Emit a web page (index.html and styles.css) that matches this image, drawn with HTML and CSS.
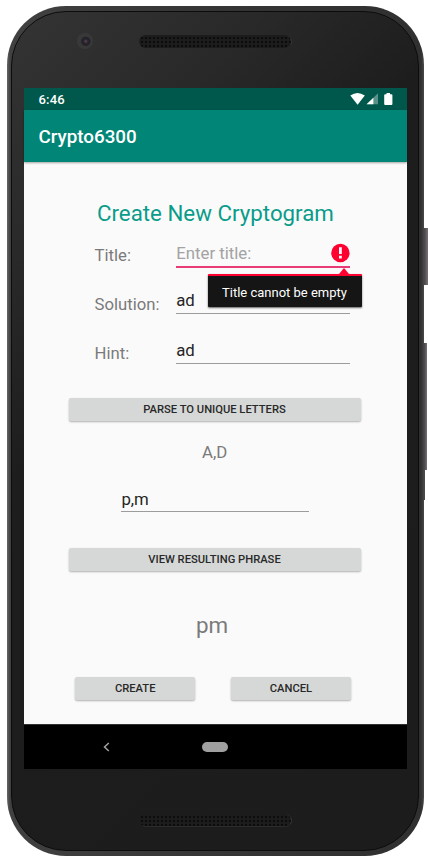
FILE: index.html
```html
<!DOCTYPE html>
<html lang="en">
<head>
<meta charset="utf-8">
<title>Crypto6300</title>
<link rel="stylesheet" href="styles.css">
</head>
<body>
<div class="phone">
  <span class="side-key power"></span>
  <span class="side-key volume"></span>
  <span class="side-key edge"></span>
  <div class="bezel">
    <div class="top-bezel">
      <span class="camera"></span>
      <span class="speaker"></span>
    </div>
    <div class="screen">
      <div class="status-bar">
        <span class="clock">6:46</span>
        <svg class="status-icons" width="43" height="14" viewBox="0 0 43 14">
          <path fill="#fff" d="M.3 3.6Q7.5-1.4 14.8 3.6L7.6 12.7Z"/>
          <path fill="#fff" fill-opacity=".35" d="M28 1.2V12.3H16.6Z"/>
          <path fill="#fff" d="M23.4 5.7V12.3H16.6Z"/>
          <path fill="#fff" d="M36.500 1h3.500v1.300h1.400q1 0 1 1v8.600q0 1-1 1h-6.200q-1 0-1-1V3.300q0-1 1-1H36.500Z"/>
        </svg>
      </div>
      <header class="app-bar">Crypto6300</header>
      <main class="content">
        <h1>Create New Cryptogram</h1>
        <form class="fields">
          <div class="field title-field">
            <label>Title:</label>
            <div class="input invalid"><span class="placeholder">Enter title:</span>
              <svg class="error-icon" width="20" height="20" viewBox="0 0 20 20"><circle cx="10.400" cy="10" r="9.200" fill="#ff0030"/><path d="M9 4.300h2.800v6.800H9zM9 12.800h2.800v2.600H9z" fill="#fff"/></svg>
              <div class="tooltip">Title cannot be empty</div>
            </div>
          </div>
          <div class="field solution-field"><label>Solution:</label><div class="input">ad</div></div>
          <div class="field hint-field"><label>Hint:</label><div class="input">ad</div></div>
        </form>
        <div class="button parse">PARSE TO UNIQUE LETTERS</div>
        <div class="letters">A,D</div>
        <div class="input mapping">p,m</div>
        <div class="button view">VIEW RESULTING PHRASE</div>
        <div class="phrase">pm</div>
        <div class="actions">
          <div class="button">CREATE</div>
          <div class="button">CANCEL</div>
        </div>
      </main>
      <nav class="nav-bar">
        <svg class="back" width="8" height="10" viewBox="0 0 8 10"><path d="M6.800 1L2.500 5l4.300 4" fill="none" stroke="#a2a2a2" stroke-width="1.500"/></svg>
        <span class="home"></span>
      </nav>
    </div>
    <div class="bottom-bezel"><span class="speaker"></span></div>
  </div>
</div>
</body>
</html>
```

FILE: styles.css
```css
* { box-sizing: border-box; }
body {
  margin: 0;
  height: 862px;
  padding: 6px 0 0 7px;
  overflow: hidden;
  background: #fff;
  font-family: Roboto, sans-serif;
}
.phone {
  position: relative;
  width: 417px;
  height: 850px;
  padding: 5px 5px 5px 4px;
  border-radius: 59px;
  background: linear-gradient(90deg, #666 0, #414142 3px, #353535 50%, #303031 414px, #4a484a 100%);
}
.side-key {
  position: absolute;
  left: 417px;
  background: linear-gradient(90deg, #454346, #777275);
}
.power { top: 222px; width: 4px; height: 57px; }
.volume { top: 337px; width: 3px; height: 127px; }
.edge { top: 464px; width: 1px; height: 30px; background: #4a484a; }
.bezel {
  height: 840px;
  border: 1px solid #0c0c0c;
  border-radius: 55px;
  padding: 0 0 0 12px;
  background: linear-gradient(135deg, #343435 0, #292929 20%, #1d1d1d 38%, #1c1c1c 100%);
}
.top-bezel {
  height: 76px;
  display: flex;
  align-items: flex-start;
  padding: 21px 0 0 53px;
}
.camera {
  width: 16px;
  height: 16px;
  border-radius: 50%;
  background: radial-gradient(circle at 55% 52%, #67474c 0, #292632 2px, #202027 4px, #373737 5px, #393939 8px);
}
.speaker {
  display: block;
  width: 153px;
  height: 13px;
  border-radius: 7px;
  border-right: 1px solid #363636;
  background: radial-gradient(circle, #060606 0, #090909 .6px, #1c1c1c 1.3px) 1px 1px / 4px 4px;
}
.top-bezel .speaker { margin: 2px 0 0 46px; }
.bottom-bezel { padding: 45px 0 0 115px; }
.bottom-bezel .speaker { background-color: #171717; border-bottom: 1px solid #2b2b2b; }
.screen {
  width: 383px;
  height: 681px;
  background: #fafafa;
}
.status-bar {
  height: 22px;
  padding: 0 14px 0 14.500px;
  display: flex;
  justify-content: space-between;
  align-items: center;
  background: #00574b;
  color: #fff;
}
.clock { font-size: 13px; font-weight: 500; letter-spacing: .2px; }
.status-icons { margin-bottom: 1px; }
.app-bar {
  height: 52px;
  line-height: 54px;
  padding-left: 14.500px;
  background: #008577;
  color: #fff;
  font-size: 18.800px;
  font-weight: 500;
  box-shadow: 0 1px 2px rgba(0,0,0,.35);
}
.content {
  height: 562px;
  padding-top: 38px;
  color: #7a7a7a;
}
h1 {
  margin: 0 0 13px 73px;
  line-height: 27px;
  height: 27px;
  font-size: 22.300px;
  font-weight: 400;
  color: #0a9c8a;
}
.fields { padding-left: 70.500px; }
.field {
  display: flex;
  font-size: 16.700px;
}
.field label { width: 81.700px; line-height: 26px; padding-top: 3px; }
.input {
  width: 174px;
  height: 27px;
  line-height: 25px;
  border-bottom: 1px solid #9c9c9c;
  color: #252525;
  font-size: 16.800px;
}
.title-field { height: 48px; }
.solution-field { height: 49px; }
.solution-field label, .hint-field label { padding-top: 4px; }
.solution-field .input { height: 26px; line-height: 25px; }
.hint-field { height: 48px; }
.hint-field .input { height: 27px; line-height: 26px; }
.invalid {
  position: relative;
  height: 28px;
  line-height: 26px;
  display: flex;
  justify-content: space-between;
  border-bottom: 2px solid #e83c76;
}
.placeholder { color: #a3a3a3; }
.error-icon { margin-top: 3px; }
.tooltip {
  position: absolute;
  left: 31.800px;
  top: 34px;
  width: 154px;
  height: 33px;
  padding-left: 14px;
  border-top: 2px solid #ff0030;
  border-radius: 1px;
  background: #151515;
  box-shadow: 0 1px 2px rgba(0,0,0,.6);
  color: #fff;
  font-size: 13px;
  line-height: 33px;
  white-space: nowrap;
}
.tooltip::before {
  content: "";
  position: absolute;
  right: 13px;
  top: -8px;
  border: 5.500px solid transparent;
  border-top: 0;
  border-bottom: 6px solid #ff0030;
}
.button {
  height: 23px;
  line-height: 24px;
  border-radius: 2px;
  background: #d6d8d7;
  box-shadow: 0 1px 2px rgba(0,0,0,.3);
  color: #282828;
  text-align: center;
  font-size: 11.200px;
  font-weight: 500;
}
.parse, .view { width: 292px; margin-left: 45px; padding-right: 1px; }
.parse { margin-top: 13px; }
.letters { margin: 18px 0 0 178px; font-size: 16.800px; line-height: 27px; }
.mapping { width: 188px; margin: 20px 0 0 97.400px; height: 26px; line-height: 26px; }
.view { margin-top: 36px; }
.phrase { margin: 40px 0 0 172px; font-size: 22.400px; line-height: 28px; }
.actions { display: flex; gap: 36px; margin: 38px 0 0 51.400px; }
.actions .button { width: 119.700px; }
.nav-bar {
  height: 45px;
  display: flex;
  align-items: center;
  padding: 0 0 1px 78px;
  border-top: 1px solid #303030;
  background: #000;
}
.home {
  width: 26px;
  height: 10px;
  margin-left: 92px;
  border-radius: 5px;
  background: #a0a0a0;
}
```
